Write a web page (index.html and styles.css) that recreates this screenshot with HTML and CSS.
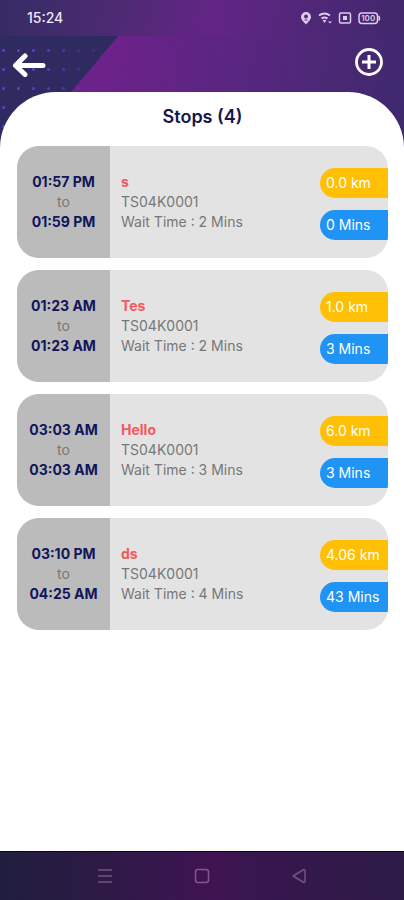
FILE: index.html
```html
<!DOCTYPE html>
<html lang="en">
<head>
    <meta charset="UTF-8">
    <meta name="viewport" content="width=device-width, initial-scale=1.0">
    <title>Stops</title>
    <link rel="stylesheet" href="styles.css">
</head>
<body>
    <div class="status-bar">
        <span>15:24</span>
        <div class="status-icons">
            <svg width="12" height="14" viewBox="0 0 12 14">
                <path d="M6 1a5 5 0 0 0-5 5c0 3 3 5 5 7.500 2-2.500 5-4.500 5-7.500a5 5 0 0 0-5-5z" fill="#dccdec"/>
                <circle cx="6" cy="5.500" r="2" fill="#5a2784"/>
                <path d="M4.500 9h3" stroke="#5a2784"/>
            </svg>
            <svg width="14" height="14" viewBox="0 0 14 14" fill="none" stroke="#dccdec">
                <path d="M1 4.500q5.500-4 11 0" stroke-width="2"/>
                <path d="M3.500 7.500q3-2.200 6 0" stroke-width="2"/>
                <path d="M4.500 9h4l-2 3z" fill="#dccdec" stroke="none"/>
                <path d="M10 10.500h4l-2 2z" fill="#dccdec" stroke="none"/>
            </svg>
            <svg width="14" height="14" viewBox="0 0 14 14">
                <rect x="1.500" y="2" width="11" height="10" rx="1.500" fill="none" stroke="#dccdec" stroke-width="1.500"/>
                <path d="M5 5h4v4H5z" fill="#dccdec"/>
            </svg>
            <svg width="23" height="14" viewBox="0 0 23 14">
                <rect x="1" y="2" width="18.500" height="10.500" rx="3" fill="none" stroke="#dccdec" stroke-width="1.500"/>
                <path d="M20.500 5q2 2.200 0 4.500" fill="none" stroke="#dccdec" stroke-width="1.500"/>
                <text x="10.200" y="10.200" class="battery-text">100</text>
            </svg>
        </div>
    </div>

    <div class="page">
        <header class="top-bar">
            <button class="icon-button" aria-label="Back">
                <svg width="34" height="24" viewBox="0 0 34 24" fill="none" stroke="#fff" stroke-width="5" stroke-linecap="round" stroke-linejoin="round">
                    <path d="M13 3L3.500 12.500l9.500 9M4 12.500h27"/>
                </svg>
            </button>
            <button class="icon-button" aria-label="Add stop">
                <svg width="30" height="30" viewBox="0 0 30 30" fill="none" stroke="#fff">
                    <circle cx="15" cy="15" r="12.500" stroke-width="2.800"/>
                    <path d="M15 8v14M8 15h14" stroke-width="3"/>
                </svg>
            </button>
        </header>

        <main class="sheet">
            <h1>Stops (4)</h1>

            <div class="stop">
                <div class="stop-time"><b>01:57 PM</b><span>to</span><b>01:59 PM</b></div>
                <div class="stop-info"><b>s</b><span>TS04K0001</span><span>Wait Time : 2 Mins</span></div>
                <div class="stop-badges">
                    <span class="badge distance">0.0 km</span>
                    <span class="badge duration">0 Mins</span>
                </div>
            </div>

            <div class="stop">
                <div class="stop-time"><b>01:23 AM</b><span>to</span><b>01:23 AM</b></div>
                <div class="stop-info"><b>Tes</b><span>TS04K0001</span><span>Wait Time : 2 Mins</span></div>
                <div class="stop-badges">
                    <span class="badge distance">1.0 km</span>
                    <span class="badge duration">3 Mins</span>
                </div>
            </div>

            <div class="stop">
                <div class="stop-time"><b>03:03 AM</b><span>to</span><b>03:03 AM</b></div>
                <div class="stop-info"><b>Hello</b><span>TS04K0001</span><span>Wait Time : 3 Mins</span></div>
                <div class="stop-badges">
                    <span class="badge distance">6.0 km</span>
                    <span class="badge duration">3 Mins</span>
                </div>
            </div>

            <div class="stop">
                <div class="stop-time"><b>03:10 PM</b><span>to</span><b>04:25 AM</b></div>
                <div class="stop-info"><b>ds</b><span>TS04K0001</span><span>Wait Time : 4 Mins</span></div>
                <div class="stop-badges">
                    <span class="badge distance">4.06 km</span>
                    <span class="badge duration">43 Mins</span>
                </div>
            </div>
        </main>
    </div>

    <nav class="nav-bar">
        <button class="icon-button" aria-label="Recent apps">
            <svg width="16" height="16" viewBox="0 0 16 16" stroke="#75527f" stroke-width="1.500">
                <path d="M1 2h14M1 8h14M1 14h14"/>
            </svg>
        </button>
        <button class="icon-button" aria-label="Home">
            <svg width="16" height="16" viewBox="0 0 16 16" fill="none" stroke="#85558f" stroke-width="1.500">
                <rect x="1.500" y="1.500" width="13" height="13" rx="2.500"/>
            </svg>
        </button>
        <button class="icon-button" aria-label="Back">
            <svg width="16" height="16" viewBox="0 0 16 16" fill="none" stroke="#75527f" stroke-width="1.500" stroke-linejoin="round">
                <path d="M2 8l11-6.500q1 0 1 1v11q0 1-1 1z"/>
            </svg>
        </button>
    </nav>
</body>
</html>
```
FILE: styles.css
```css
* {
    box-sizing: border-box;
}

body {
    font-family: Inter, "Liberation Sans", sans-serif;
    font-size: 14px;
    line-height: 20px;
    color: #777;
    margin: 0;
    min-height: 100vh;
    display: flex;
    flex-direction: column;
}

.status-bar {
    display: flex;
    align-items: center;
    justify-content: space-between;
    height: 36px;
    padding: 0 23px 0 27px;
    color: #f0eaf6;
    font-weight: 500;
    background: linear-gradient(100deg, #352c64 0%, #4c2a72 28%, #632585 52%, #512779 75%, #40286c 100%);
}

.status-icons {
    display: flex;
    align-items: center;
    gap: 6px;
}

.battery-text {
    font-size: 8px;
    font-weight: 600;
    text-anchor: middle;
    fill: #dccdec;
}

.page {
    position: relative;
    z-index: 0;
    flex: 1;
    display: flex;
    flex-direction: column;
    background:
        linear-gradient(130deg, #2f2b60 90px, transparent 91px) 0 0 / 100% 140px,
        linear-gradient(100deg, #6b2289 0, #6b2289 28%, #5d2583 50%, #4d2877 75%, #3d296c 100%) 0 0 / 100% 140px;
    background-repeat: no-repeat;
}

/* dotted pattern in the top left corner */
.page::before {
    content: "";
    position: absolute;
    z-index: -1;
    top: 0;
    left: 0;
    width: 125px;
    height: 110px;
    background: radial-gradient(circle, #5043cc 1px, transparent 2px) -4px 5px / 15px 19px;
    mask-image: linear-gradient(90deg, black 20%, transparent);
}

.top-bar {
    display: flex;
    align-items: flex-end;
    justify-content: space-between;
    height: 56px;
    padding: 0 20px 15px 12px;
}

.icon-button {
    display: flex;
    padding: 0;
    border: none;
    background: none;
    cursor: pointer;
}

.sheet {
    flex: 1;
    display: flex;
    flex-direction: column;
    gap: 12px;
    padding: 13px 16px 12px 17px;
    background-color: white;
    border-radius: 56px 56px 0 0;
}

h1 {
    font-size: 18px;
    line-height: 24px;
    font-weight: 600;
    text-align: center;
    color: #14174a;
    margin: 0 0 5px;
}

.stop {
    display: flex;
    min-height: 112px;
    border-radius: 22px;
    overflow: hidden;
    background-color: #e3e3e3;
}

.stop-time,
.stop-info {
    display: flex;
    flex-direction: column;
    justify-content: center;
}

.stop-time {
    width: 93px;
    align-items: center;
    background-color: #bbb;
}

.stop-time b {
    font-weight: 700;
    color: #11155a;
}

.stop-info {
    flex: 1;
    padding-left: 11px;
}

.stop-info b {
    font-weight: 700;
    color: #f4595c;
}

.stop-badges {
    display: flex;
    flex-direction: column;
    justify-content: center;
    gap: 12px;
    width: 68px;
    padding-top: 4px;
}

.badge {
    padding: 5px 0 5px 6px;
    border-radius: 15px 0 0 15px;
    color: white;
    white-space: nowrap;
}

.distance {
    background-color: #ffbf05;
}

.duration {
    background-color: #2094f5;
}

.nav-bar {
    display: flex;
    align-items: center;
    justify-content: space-around;
    height: 49px;
    padding: 0 57px;
    border-top: 1px solid #0c0618;
    background: linear-gradient(90deg, #1f1e3e 0%, #2d1a45 25%, #3a1550 46%, #401351 53%, #38164f 62%, #2d1b46 100%);
}
```
